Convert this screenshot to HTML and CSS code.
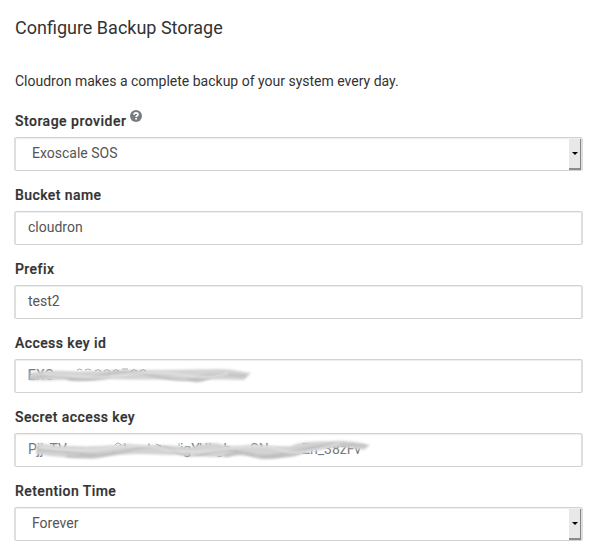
FILE: index.html
```html
<!DOCTYPE html>
<html lang="en">
<head>
<meta charset="utf-8">
<title>Configure Backup Storage</title>
<link rel="stylesheet" href="styles.css">
</head>
<body>
<main class="dialog">
  <h4 class="title">Configure Backup Storage</h4>
  <p class="intro">Cloudron makes a complete backup of your system every day.</p>
  <form class="form">
    <div class="group">
      <div class="label"><span class="l-provider">Storage provider</span><svg class="help" viewBox="0 0 12 12"><circle cx="6" cy="6" r="6"/><path d="M4 4.7C4.1 2.3 8 2.4 8 4.6C8 5.8 6.1 5.9 6.1 7.1M6.1 8.1V9.6"/></svg></div>
      <div class="control select"><span>Exoscale SOS</span><i class="arrow"></i></div>
    </div>
    <div class="group">
      <div class="label"><span>Bucket name</span></div>
      <div class="control"><span>cloudron</span></div>
    </div>
    <div class="group">
      <div class="label"><span>Prefix</span></div>
      <div class="control"><span>test2</span></div>
    </div>
    <div class="group">
      <div class="label"><span>Access key id</span></div>
      <div class="control"><span class="key">EXO</span>
        <svg class="smudge" width="360" height="32" viewBox="15 360 360 32">
          <defs>
            <filter id="soft" x="-5%" y="-50%" width="110%" height="200%"><feGaussianBlur stdDeviation="0.9"/></filter>
            <filter id="fine" x="-5%" y="-50%" width="110%" height="200%"><feGaussianBlur stdDeviation="0.9"/></filter>
          </defs>
          <path class="base" filter="url(#soft)" d="M30 373C45 370 55 371 67 371C80 372 91 371 105 370.500C125 370 142 370 161 370C180 370 201 369 220 369C233 369 242 372 251 373L244 380C231 380 219 379 207 380C200 383 194 383 187 380C160 379 131 380 110 379C92 382 77 381 63 380C52 380 42 381 30 380Z"/>
          <g class="dark" filter="url(#fine)"><path d="M30 379Q48 373 66 377T104 375T155 376T196 378T246 376"/><path d="M68 379Q89 381 110 376M188 379Q200 382 210 377L225 374"/></g>
          <path class="light" filter="url(#fine)" d="M44 374Q70 376 88 377T132 374T184 375T228 373"/>
          <path class="bits" d="M77 370Q80 368 82 370M85 370Q88 368 91 370M95 371Q98 368 101 371M104 371Q107 368 110 371M113 371Q116 368 119 371M122 369H128M131 371Q134 368 137 371M140 371Q143 368 146 371M29 369V380"/>
        </svg>
      </div>
    </div>
    <div class="group">
      <div class="label"><span>Secret access key</span></div>
      <div class="control"><span class="key">Pjj</span><span class="key k-tv">TV</span><span class="key k-mid">igYUhgh</span><span class="key k-sn">SN</span><span class="key k-end">Zn_38zFv</span>
        <svg class="smudge" width="360" height="32" viewBox="15 434 360 32">
          <path class="base" filter="url(#soft)" d="M37 443C49 445 56 446 73 446C88 447 103 446 116 445C130 442 137 446 150 446C166 444 178 446 191 447C205 443 213 442 220 444C230 447 240 446 250 445C266 445 280 447 291 446C305 440 320 442 333 441C350 440 360 443 370 445L364 450C344 446 332 447 319 449C307 450 300 456 290 457C275 458 268 461 255 458C245 455 238 455 230 457C216 457 205 458 191 454C172 456 156 454 139 454C118 454 107 457 93 459C75 458 55 457 36 454Z"/>
          <g class="dark" filter="url(#fine)"><path d="M37 450Q65 451 83 454T130 450T174 451T208 453T244 453T286 453T334 444L366 446"/><path d="M66 456Q95 458 116 452M225 456Q240 450 254 455M260 457Q291 457 309 450L342 444"/></g>
          <path class="light" filter="url(#fine)" d="M41 447Q75 453 109 448T164 449T225 449T281 450T340 443"/>
          <path class="bits" d="M115 445Q118 441 121 445M125 446V443M149 446V443M156 444L161 446M179 446V443"/>
        </svg>
      </div>
    </div>
    <div class="group">
      <div class="label"><span>Retention Time</span></div>
      <div class="control select"><span>Forever</span><i class="arrow"></i></div>
    </div>
  </form>
</main>
</body>
</html>
```
FILE: styles.css
```css
* { box-sizing: border-box; }
html { height: 100%; overflow: hidden; background: #fff; }
body { margin: 0; font: 14px/20px Roboto, sans-serif; color: #333; }
.dialog { padding: 15px 13px 0 14px; }
.title { margin: 0 0 31px 1px; font-size: 18px; line-height: 25px; font-weight: 400; }
.intro { margin: 0 0 20px 1px; }
.group { margin-bottom: 15px; }
.label { display: flex; height: 20px; margin: 0 0 6px 1px; font-weight: 500; letter-spacing: .43px; -webkit-text-stroke: .2px #333; }
.l-provider { letter-spacing: .5px; }
.help { width: 12px; height: 12px; margin: -1px 0 0 4px; fill: #777c80; }
.help path { fill: none; stroke: #fff; stroke-width: 1.8; }
.control { position: relative; display: flex; align-items: center; height: 34px; margin-bottom: -1px; padding: 0 13px 0 12px; border: 1px solid #d2d2d2; border-left: 2px solid #dedede; border-right: 2px solid #dedede; border-radius: 2px; color: #555; box-shadow: inset 0 1px 1px rgba(0,0,0,.07); }
.control > span { position: relative; top: -1px; }
.select { padding-left: 16px; padding-right: 0; }
.arrow { display: flex; align-items: center; justify-content: center; width: 12px; height: 31px; margin: 1px 0 0 auto; background: #e8e8e8; border-right: 1px solid #858585; border-bottom: 2px solid #8b8b8b; }
.arrow::before { content: ""; border: 3.5px solid transparent; border-top-color: #000; border-bottom: 0; }
.key { color: #777; white-space: nowrap; }
.k-tv { margin-left: 6px; }
.k-mid { margin-left: 113px; }
.k-sn { margin-left: 19px; }
.k-end { margin-left: 33px; }
.smudge { position: absolute; left: -1px; top: 0; }
.base { fill: #d3d3d3; }
.dark { fill: none; stroke: #bdbdbd; stroke-width: 2; }
.light { fill: none; stroke: #e2e2e2; stroke-width: 2; }
.bits { fill: none; stroke: #999; stroke-width: .8; }
```
